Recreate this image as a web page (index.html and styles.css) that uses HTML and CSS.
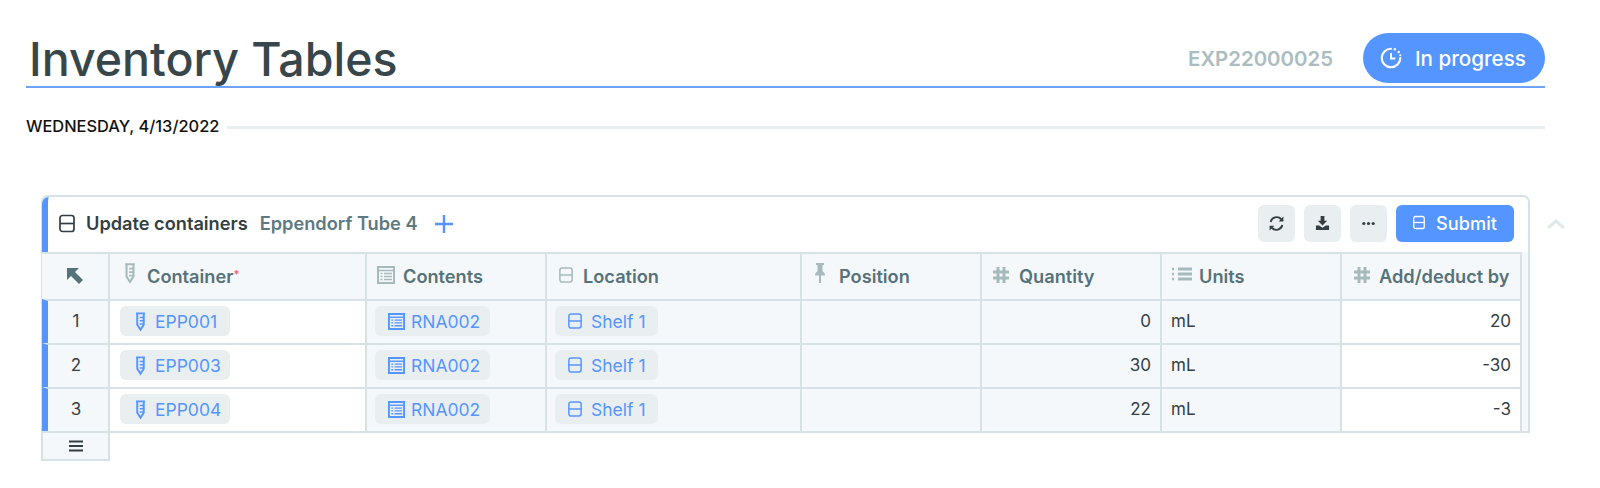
FILE: index.html
```html
<!DOCTYPE html>
<html lang="en">
<head>
<meta charset="utf-8">
<title>Inventory Tables</title>
<link rel="stylesheet" href="styles.css">
</head>
<body>
<svg class="defs" width="0" height="0" aria-hidden="true">
  <symbol id="tube" viewBox="0 0 16 24"><path d="M2.500 2h11M4 2v14l4 6 4-6V2" fill="none" stroke="currentColor" stroke-width="2.400"/><path d="M7 7h5M7 11h5M7 15h4" stroke="currentColor" stroke-width="2"/></symbol>
  <symbol id="list" viewBox="0 0 18 18"><path d="M1 1h16v16H1z" fill="none" stroke="currentColor" stroke-width="2"/><path d="M1 4.500h16" stroke="currentColor" stroke-width="1.500"/><path d="M3.500 7.500h2M7 7.500h8M3.500 10.500h2M7 10.500h8M3.500 13.500h2M7 13.500h8" stroke="currentColor" stroke-width="1.400"/></symbol>
  <symbol id="box" viewBox="0 0 16 18"><rect x="1" y="1" width="14" height="16" rx="2.500" fill="none" stroke="currentColor" stroke-width="1.700"/><path d="M1 9h14" stroke="currentColor" stroke-width="1.700"/></symbol>
  <symbol id="hash" viewBox="0 0 18 18"><path d="M6 1v16M12 1v16M1 6h16M1 12h16" fill="none" stroke="currentColor" stroke-width="3"/></symbol>
  <symbol id="pin" viewBox="0 0 12 22"><path d="M2 1h8v2H8.500v6L11 12v1.500H7V21H5v-7.500H1V12l2.500-3V3H2z" fill="currentColor"/></symbol>
  <symbol id="units" viewBox="0 0 20 14"><path d="M6 2h14M6 7h14M6 12h14" stroke="currentColor" stroke-width="2.800"/><path d="M0 2h3M0 7h3M0 12h3" stroke="currentColor" stroke-width="2.600" stroke-dasharray="2 1"/></symbol>
</svg>

<header class="title-row">
  <h1 class="title">Inventory Tables</h1>
  <span class="exp-id">EXP22000025</span>
  <span class="status">
    <svg class="status-icon" viewBox="0 0 22 22"><path d="M11 2.500a8.500 8.500 0 1 0 8.500 8.500" fill="none" stroke="currentColor" stroke-width="2" stroke-linecap="round"/><path d="M11 6.500V11.500H15" fill="none" stroke="currentColor" stroke-width="1.800"/><circle cx="14.500" cy="3" r="1.100" fill="currentColor"/><circle cx="18" cy="5.500" r="1.100" fill="currentColor"/><circle cx="19.500" cy="8.500" r="1" fill="currentColor"/></svg>
    In progress
  </span>
</header>

<div class="date-row"><span class="date">WEDNESDAY, 4/13/2022</span><span class="date-rule"></span></div>

<section class="table-wrap">
  <div class="card">
    <div class="panel">
      <div class="toolbar">
        <svg class="tb-icon"><use href="#box"/></svg>
        <span class="tb-title">Update containers</span>
        <span class="tb-sub">Eppendorf Tube 4</span>
        <svg class="tb-plus" viewBox="0 0 18 18"><path d="M9 0v18M0 9h18" stroke="currentColor" stroke-width="2.400"/></svg>
        <span class="tb-actions">
          <button class="icon-btn"><svg class="refresh" viewBox="0 0 16 16"><path d="M2.500 6.500A5.800 5.800 0 0 1 12.500 4M13.500 9.500A5.800 5.800 0 0 1 3.500 12" fill="none" stroke="currentColor" stroke-width="1.800"/><path d="M14.500 1.500v4.500H10zM1.500 14.500V10H6z" fill="currentColor"/></svg></button>
          <button class="icon-btn"><svg viewBox="0 0 16 16"><path d="M6 0h4v5h3L8 10 3 5h3zM1 10h3.500L8 12.500 11.500 10H15v5H1z" fill="currentColor"/></svg></button>
          <button class="icon-btn"><svg viewBox="0 0 16 16"><circle cx="3" cy="8" r="1.700" fill="currentColor"/><circle cx="8" cy="8" r="1.700" fill="currentColor"/><circle cx="13" cy="8" r="1.700" fill="currentColor"/></svg></button>
          <button class="submit"><svg class="submit-icon"><use href="#box"/></svg>Submit</button>
        </span>
      </div>

      <div class="grid">
        <div class="cell head idx"><svg class="arrow" viewBox="0 0 18 18"><path d="M1 1h12L9 5l8 8-4 4-8-8-4 4z" fill="currentColor"/></svg></div>
        <div class="cell head"><svg class="h-icon tube-h"><use href="#tube"/></svg><span>Container<sup class="req">*</sup></span></div>
        <div class="cell head"><svg class="h-icon list-h"><use href="#list"/></svg><span>Contents</span></div>
        <div class="cell head"><svg class="h-icon box-h"><use href="#box"/></svg><span>Location</span></div>
        <div class="cell head"><svg class="h-icon pin-h"><use href="#pin"/></svg><span>Position</span></div>
        <div class="cell head"><svg class="h-icon hash-h"><use href="#hash"/></svg><span>Quantity</span></div>
        <div class="cell head"><svg class="h-icon units-h"><use href="#units"/></svg><span>Units</span></div>
        <div class="cell head"><svg class="h-icon hash-h add-h"><use href="#hash"/></svg><span>Add/deduct by</span></div>

        <div class="cell idx num-idx">1</div>
        <div class="cell white"><a class="chip"><svg class="c-tube"><use href="#tube"/></svg>EPP001</a></div>
        <div class="cell"><a class="chip"><svg class="c-list"><use href="#list"/></svg>RNA002</a></div>
        <div class="cell"><a class="chip"><svg class="c-box"><use href="#box"/></svg>Shelf 1</a></div>
        <div class="cell"></div>
        <div class="cell right">0</div>
        <div class="cell">mL</div>
        <div class="cell white right">20</div>

        <div class="cell idx num-idx">2</div>
        <div class="cell white"><a class="chip"><svg class="c-tube"><use href="#tube"/></svg>EPP003</a></div>
        <div class="cell"><a class="chip"><svg class="c-list"><use href="#list"/></svg>RNA002</a></div>
        <div class="cell"><a class="chip"><svg class="c-box"><use href="#box"/></svg>Shelf 1</a></div>
        <div class="cell"></div>
        <div class="cell right">30</div>
        <div class="cell">mL</div>
        <div class="cell white right">-30</div>

        <div class="cell idx num-idx">3</div>
        <div class="cell white"><a class="chip"><svg class="c-tube"><use href="#tube"/></svg>EPP004</a></div>
        <div class="cell"><a class="chip"><svg class="c-list"><use href="#list"/></svg>RNA002</a></div>
        <div class="cell"><a class="chip"><svg class="c-box"><use href="#box"/></svg>Shelf 1</a></div>
        <div class="cell"></div>
        <div class="cell right">22</div>
        <div class="cell">mL</div>
        <div class="cell white right">-3</div>
      </div>
    </div>
    <div class="foot"><svg class="menu" viewBox="0 0 14 12"><path d="M0 1.500h14M0 6h14M0 10.500h14" stroke="currentColor" stroke-width="1.800"/></svg></div>
  </div>
  <svg class="collapse" viewBox="0 0 20 12"><path d="M2 10l8-7 8 7" fill="none" stroke="currentColor" stroke-width="3"/></svg>
</section>
</body>
</html>
```

FILE: styles.css
```css
* { box-sizing: border-box; }
html, body { margin: 0; background: #fff; }
body { width: 1600px; height: 488px; overflow: hidden; font-family: "Inter", "Noto Sans", sans-serif; color: #333f44; }
.defs { position: absolute; }

.title-row { margin-left: 26px; width: 1519px; height: 88px; border-bottom: 2px solid #6ea4ff; display: flex; align-items: flex-start; padding-top: 34px; }
.title { margin: 0 auto 0 3px; font-size: 46.500px; line-height: 50px; font-weight: 550; color: #37464b; height: 50px; white-space: nowrap; }
.exp-id { font-size: 20.400px; font-weight: 600; line-height: 50px; color: #abbdc0; margin-right: 30px; }
.status { width: 182px; height: 50px; margin-top: -1px; border-radius: 25px; background: #5595ff; color: #fff; display: flex; align-items: center; padding-left: 16px; gap: 12px; font-size: 20.600px; font-weight: 500; }
.status-icon { width: 24px; height: 24px; }

.date-row { margin: 29px 0 0 26px; width: 1519px; height: 20px; display: flex; align-items: center; gap: 8px; }
.date { font-size: 16.400px; font-weight: 500; color: #111; white-space: nowrap; padding-bottom: 2px; }
.date-rule { flex: 1; height: 3px; background: #e9eff1; }

.table-wrap { margin: 58px 0 0 41px; display: flex; align-items: flex-start; }
.card { width: 1489px; }
.panel { border: 2px solid #d6e2e5; border-radius: 7px 7px 0 0; background: #f5f8fa; }

.toolbar { background: #fff; height: 55px; margin-left: -1px; border-left: 6px solid #5595ff; border-top-left-radius: 7px; border-top-right-radius: 6px; display: flex; align-items: center; padding: 0 14px 2px 11px; }
.tb-icon { width: 16px; height: 19px; color: #333f44; margin-right: 11px; }
.tb-title { font-size: 18.200px; font-weight: 600; color: #333f44; padding-bottom: 2px; }
.tb-sub { font-size: 18.200px; font-weight: 600; color: #5d7a80; margin-left: 12px; padding-bottom: 2px; }
.tb-plus { width: 18px; height: 18px; color: #5595ff; margin-left: 17px; }
.tb-actions { margin-left: auto; display: flex; align-items: center; gap: 9px; }
.icon-btn { width: 37px; height: 37px; border: 0; padding: 0; border-radius: 6px; background: #e9eff1; color: #333f44; display: flex; align-items: center; justify-content: center; }
.icon-btn svg { width: 15px; height: 15px; }
.icon-btn .refresh { width: 17px; height: 17px; }
.submit { width: 118px; height: 37px; border: 0; padding: 0 0 2px; border-radius: 6px; background: #5595ff; color: #fff; font: 500 18.200px "Inter", sans-serif; display: flex; align-items: center; justify-content: center; gap: 11px; }
.submit-icon { width: 12px; height: 15px; }

.grid { display: grid; margin-left: -1px; grid-template-columns: 68px 257px 180px 255px 180px 180px 180px 180px; grid-template-rows: 47px 44px 44px 44px; width: 1480px; }
.cell { border-top: 2px solid #d6e2e5; border-right: 2px solid #d6e2e5; background: #f5f8fa; display: flex; align-items: center; padding: 0 9px 2px; font-size: 17px; color: #333f44; }
.cell:nth-child(8n+1) { padding: 0 0 2px; justify-content: center; }
.head { font-weight: 600; color: #56727a; gap: 10px; padding-left: 13px; font-size: 18.200px; }
.white { background: #fff; }
.right { justify-content: flex-end; }
.num-idx { border-left: 6px solid #5595ff; }
.cell.num-idx { padding-right: 4px; }
.idx { color: #333f44; font-size: 17px; }
.arrow { width: 18px; height: 18px; color: #56727a; }
.h-icon { color: #a6babd; flex: none; }
.tube-h { width: 14px; height: 24px; margin-top: -5px; margin-left: 0; margin-right: 0; }
.list-h { width: 18px; height: 20px; margin-top: -2px; margin-left: -3px; margin-right: -2px; }
.box-h { width: 14px; height: 18px; margin-top: -1px; margin-left: -1px; margin-right: 0; }
.pin-h { width: 12px; height: 22px; margin-top: -5px; margin-left: -1px; margin-right: 3px; }
.hash-h { width: 18px; height: 18px; margin-top: -1px; margin-left: -3px; margin-right: -1px; }
.add-h { margin-left: -2px; margin-right: -2px; }
.units-h { width: 20px; height: 14px; margin-left: -3px; margin-right: -3px; margin-top: -3px; }
.req { color: #ff5c6c; font-size: 11px; line-height: 0; vertical-align: 5px; }

.chip { display: inline-flex; align-items: center; height: 30px; border-radius: 6px; background: #e9eff1; color: #5595ff; padding: 0 0 0 14px; gap: 8px; font-size: 17.500px; width: 110px; margin-left: 1px; white-space: nowrap; }
.chip svg { color: #5595ff; flex: none; }
.c-tube { width: 13px; height: 21px; }
.c-list { width: 17px; height: 19px; margin-right: -2px; }
.c-box { width: 14px; height: 18px; margin-right: 1px; }
.cell:nth-child(8n+3) .chip { width: 115px; padding-left: 13px; margin-left: -1px; }
.cell:nth-child(8n+4) .chip { width: 103px; padding-left: 13px; margin-left: -1px; }

.foot { width: 69px; height: 28px; border: 2px solid #d6e2e5; border-top: 0; background: #f5f8fa; display: flex; align-items: center; justify-content: center; }
.menu { width: 14px; height: 12px; color: #333f44; }
.collapse { width: 20px; height: 12px; color: #e0e9eb; margin: 23px 0 0 16px; }
```
